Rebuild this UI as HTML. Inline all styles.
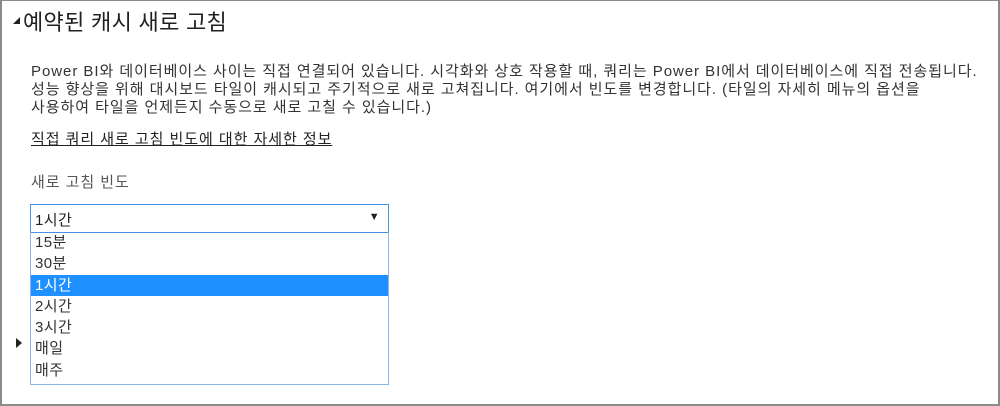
<!DOCTYPE html>
<html><head><meta charset="utf-8"><style>
*{margin:0;padding:0;box-sizing:border-box}
body{width:1000px;height:406px;background:#fff;font-family:"Liberation Sans","Noto Sans CJK KR",sans-serif;color:#333;position:relative;overflow:hidden}
.frame{position:absolute;left:0;top:0;width:1000px;height:406px;border:2px solid #8a8a8a;border-top-width:1px}
.t{position:absolute;white-space:nowrap}
.title{left:23px;top:5px;font-size:22px;color:#222;letter-spacing:0.3px}
.p{left:31px;font-size:15px;color:#333;letter-spacing:0.95px;line-height:18px}
.sel{position:absolute;left:30px;top:204px;width:359px;height:29px;border:1px solid #4a90e2;font-size:15px;padding:4px 4px;color:#222;letter-spacing:0.4px}
.list{position:absolute;left:30px;top:232px;width:359px;height:153px;border:1px solid #8ab4e8;border-top:none;font-size:15px;letter-spacing:0.4px}
.list div{height:21.3px;line-height:21px;padding-left:4px;color:#333}
.list .on{background:#1e90ff;color:#fff}
</style></head><body>
<div class="frame"></div>
<div class="t" style="left:13px;top:17px;width:0;height:0;border-right:7px solid #222;border-top:7px solid transparent"></div>
<div class="t title">예약된 캐시 새로 고침</div>
<div class="t p" style="top:63px">Power BI와 데이터베이스 사이는 직접 연결되어 있습니다. 시각화와 상호 작용할 때, 쿼리는 Power BI에서 데이터베이스에 직접 전송됩니다.</div>
<div class="t p" style="top:81px">성능 향상을 위해 대시보드 타일이 캐시되고 주기적으로 새로 고쳐집니다. 여기에서 빈도를 변경합니다. (타일의 자세히 메뉴의 옵션을</div>
<div class="t p" style="top:99px">사용하여 타일을 언제든지 수동으로 새로 고칠 수 있습니다.)</div>
<div class="t p" style="top:131px;text-decoration:underline;color:#222">직접 쿼리 새로 고침 빈도에 대한 자세한 정보</div>
<div class="t p" style="top:174px;color:#555">새로 고침 빈도</div>
<div class="sel">1시간<span style="position:absolute;right:8px;top:6px;font-size:11px">▼</span></div>
<div class="list"><div>15분</div><div>30분</div><div class="on">1시간</div><div>2시간</div><div>3시간</div><div>매일</div><div>매주</div></div>
<div class="t" style="left:16px;top:338px;width:0;height:0;border-left:6px solid #222;border-top:5px solid transparent;border-bottom:5px solid transparent"></div>
</body></html>
